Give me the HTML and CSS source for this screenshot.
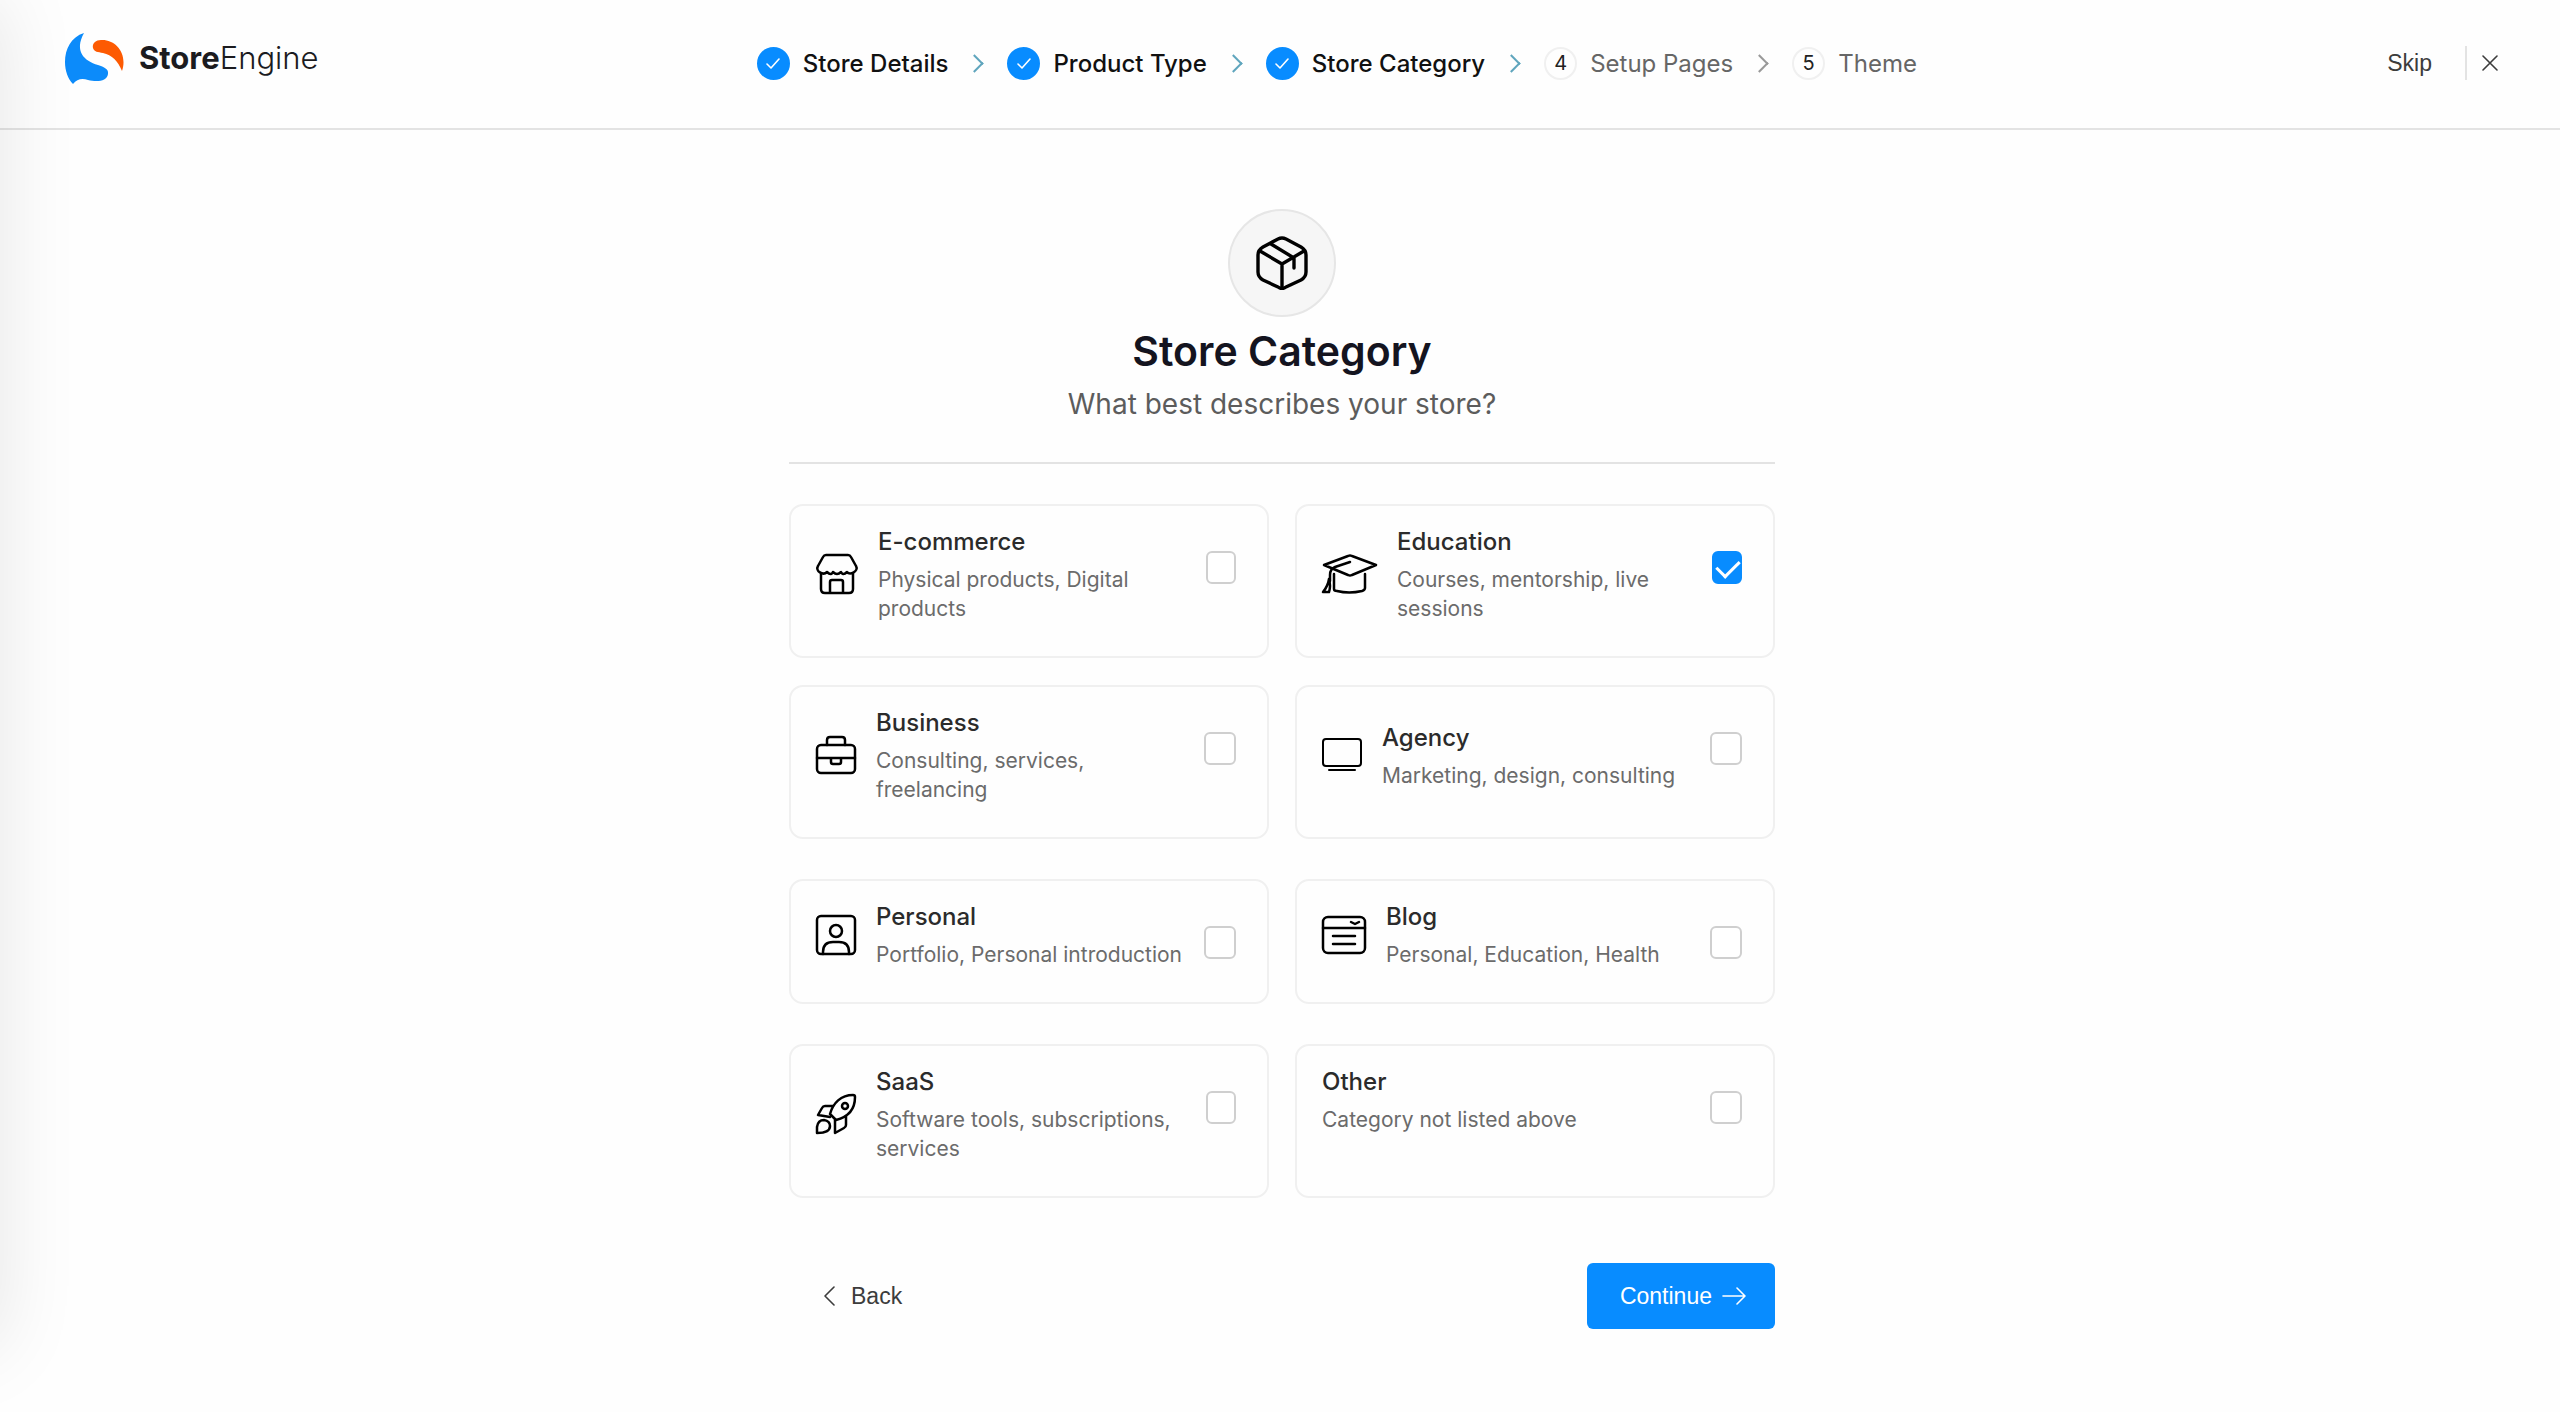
FILE: index.html
```html
<!DOCTYPE html>
<html lang="en">
<head>
  <meta charset="UTF-8">
  <title>StoreEngine Setup</title>
  <link rel="stylesheet" href="styles.css">
</head>
<body>
  <header class="header">
    <a href="#" class="logo">
      <svg class="logo-mark" width="60" height="52" viewBox="0 0 60 52">
        <path fill="#0c8bfa" d="M19 0C6 4 0 16 0 29c0 9 3 17 8 22 4-5 9-6 15-4 8 2 19 2 20-6 1-5-4-7-10-9C19 28 9 18 19 0Z"/>
        <path fill="#fd5a02" d="M57 38C63 20 50 6 36 7c-6 0-9 4-8 8 1 4 5 4 10 5 9 2 15 8 19 18Z"/>
      </svg>
      <span class="logo-text"><b>Store</b>Engine</span>
    </a>
    <nav class="progress">
      <ol class="steps">
        <li class="step done">
          <span class="step-badge"><svg width="14" height="11" viewBox="0 0 14 11"><path d="M1 6l4 4 8-9"/></svg></span>
          Store Details
        </li>
        <li class="step done">
          <span class="step-badge"><svg width="14" height="11" viewBox="0 0 14 11"><path d="M1 6l4 4 8-9"/></svg></span>
          Product Type
        </li>
        <li class="step done">
          <span class="step-badge"><svg width="14" height="11" viewBox="0 0 14 11"><path d="M1 6l4 4 8-9"/></svg></span>
          Store Category
        </li>
        <li class="step">
          <span class="step-badge">4</span>
          Setup Pages
        </li>
        <li class="step">
          <span class="step-badge">5</span>
          Theme
        </li>
      </ol>
    </nav>
    <div class="header-actions">
      <button type="button" class="skip">Skip</button>
      <button type="button" class="close" aria-label="Close">
        <svg width="16" height="16" viewBox="0 0 16 16"><path d="M1 1l14 14M15 1L1 15"/></svg>
      </button>
    </div>
  </header>

  <main class="setup">
    <div class="intro">
      <div class="intro-icon">
        <svg width="52" height="54" viewBox="0 0 52 54">
          <path d="M22 3 7 11Q2 14 2 19V36Q2 41 7 44L22 51Q26 54 30 51L45 44Q50 41 50 36V19Q50 14 45 11L30 3Q26 1 22 3Z"/>
          <path d="M4 15l22 13 22-13M26 28v24M15 8l23 14v10"/>
        </svg>
      </div>
      <h1>Store Category</h1>
      <p>What best describes your store?</p>
    </div>

    <form>
      <div class="cards">
        <label class="card">
          <svg class="icon" width="42" height="40" viewBox="0 0 42 40">
            <path d="M10 1h22q2 0 3 2l5 9c3 5-6 10-9 6q-4 4-6 0-4 4-8 0-2 4-6 0C7 22-1 17 2 12l5-9q1-2 3-2Z"/>
            <path d="M5 20v15q0 4 4 4h24q4 0 4-4V20M14 39V28q0-2 2-2h9q2 0 2 2v11"/>
          </svg>
          <span class="card-text">
            <strong>E-commerce</strong>
            <span>Physical products, Digital products</span>
          </span>
          <input type="checkbox" class="narrow" name="category">
        </label>
        <label class="card">
          <svg class="icon" width="55" height="40" viewBox="0 0 55 40">
            <path d="M2 11 26 2q2-1 4 0l24 9-24 10q-2 1-4 0ZM28 8 13 13q-5 2-5 8v6"/>
            <path d="M12 20v15q0 2 3 2 12 3 25 0 3-1 3-3V20"/>
            <path d="M7 25Q6 32 1 38h6q2-6 0-13Z"/>
          </svg>
          <span class="card-text">
            <strong>Education</strong>
            <span>Courses, mentorship, live sessions</span>
          </span>
          <input type="checkbox" class="narrow" name="category" checked>
        </label>
        <label class="card">
          <svg class="icon" width="40" height="38" viewBox="0 0 40 38">
            <rect x="1" y="9" width="38" height="28" rx="4"/>
            <path d="M11 9V4q0-3 3-3h12q3 0 3 3v5M1 22h38M15 22v4q0 2 2 2h6q2 0 2-2v-4"/>
          </svg>
          <span class="card-text">
            <strong>Business</strong>
            <span>Consulting, services, freelancing</span>
          </span>
          <input type="checkbox" name="category">
        </label>
        <label class="card">
          <svg class="icon icon-thin" width="40" height="34" viewBox="0 0 40 34">
            <rect x="1" y="1" width="38" height="27" rx="3"/>
            <path d="M7 32h26"/>
          </svg>
          <span class="card-text">
            <strong>Agency</strong>
            <span>Marketing, design, consulting</span>
          </span>
          <input type="checkbox" name="category">
        </label>
      </div>

      <div class="cards">
        <label class="card">
          <svg class="icon" width="40" height="40" viewBox="0 0 40 40">
            <rect x="1" y="1" width="38" height="38" rx="4"/>
            <circle cx="20" cy="16" r="6"/>
            <path d="M7 39v-2q0-10 10-10h6q10 0 10 10v2"/>
          </svg>
          <span class="card-text">
            <strong>Personal</strong>
            <span>Portfolio, Personal introduction</span>
          </span>
          <input type="checkbox" name="category">
        </label>
        <label class="card">
          <svg class="icon" width="44" height="40" viewBox="0 0 44 40">
            <rect x="1" y="2" width="42" height="36" rx="5"/>
            <path d="M1 13h42M11 21h22M11 29h22M29 7l4 2 4-2"/>
          </svg>
          <span class="card-text">
            <strong>Blog</strong>
            <span>Personal, Education, Health</span>
          </span>
          <input type="checkbox" name="category">
        </label>
      </div>

      <div class="cards">
        <label class="card">
          <svg class="icon" width="40" height="40" viewBox="0 0 40 40">
            <path d="M14 20C17 9 25 1 37 1q2 0 2 2c0 12-7 20-19 23Z"/>
            <circle cx="29" cy="12" r="3"/>
            <path d="M17 12H9q-2 0-3 2l-4 7 12 2M30 22v9q0 2-2 3l-9 5V26"/>
            <path d="M1 39v-6q1-7 7-7 6 1 6 6 0 7-13 7Z"/>
          </svg>
          <span class="card-text">
            <strong>SaaS</strong>
            <span>Software tools, subscriptions, services</span>
          </span>
          <input type="checkbox" class="narrow" name="category">
        </label>
        <label class="card card-plain">
          <span class="card-text">
            <strong>Other</strong>
            <span>Category not listed above</span>
          </span>
          <input type="checkbox" name="category">
        </label>
      </div>

      <div class="form-actions">
        <button type="button" class="back">
          <svg width="12" height="20" viewBox="0 0 12 20"><path d="M11 1L2 10l9 9"/></svg>
          Back
        </button>
        <button type="submit" class="continue">
          Continue
          <svg width="24" height="18" viewBox="0 0 24 18"><path d="M1 9h22M15 1l8 8-8 8"/></svg>
        </button>
      </div>
    </form>
  </main>
</body>
</html>
```

FILE: styles.css
```css
* {
  box-sizing: border-box;
}
body {
  margin: 0;
  min-height: 100vh;
  font-family: Inter, sans-serif;
  color: #2b2b2b;
  background: #fefefe;
}
/* shadow of the admin sidebar */
body::before {
  content: "";
  position: fixed;
  top: 0;
  bottom: 66px;
  left: -160px;
  width: 160px;
  box-shadow: 0 0 80px rgba(0, 0, 0, 0.1);
}
svg {
  display: block;
  flex-shrink: 0;
  fill: none;
  stroke: currentColor;
  stroke-width: 2;
  stroke-linecap: round;
  stroke-linejoin: round;
}
button {
  border: 0;
  background: none;
  padding: 0;
  cursor: pointer;
  color: #3c3c3c;
  font-family: "Liberation Sans", Arial, sans-serif;
  font-size: 23px;
}
button svg,
.step-badge svg {
  stroke-width: 1.6;
}

/* header */
.header {
  display: flex;
  align-items: center;
  justify-content: space-between;
  height: 130px;
  padding: 0 62px 2px 65px;
  border-bottom: 2px solid #e3e3e3;
}
.logo {
  display: flex;
  align-items: center;
  gap: 14px;
  padding-bottom: 8px;
  color: #1b1b1f;
  text-decoration: none;
}
.logo-mark {
  stroke: none;
}
.logo-text {
  padding-bottom: 4px;
  font-size: 31px;
  font-weight: 300;
}
.logo-text b {
  font-weight: 700;
}
.progress {
  margin-right: 32px;
}
.steps {
  display: flex;
  margin: 0;
  padding: 0;
  list-style: none;
}
.step {
  display: flex;
  align-items: center;
  gap: 13px;
  font-size: 24px;
  color: #666;
}
.step.done {
  color: #111;
  font-weight: 500;
}
.step + .step::before {
  content: "";
  width: 11px;
  height: 11px;
  margin: 0 13px 0 20px;
  border: solid #999;
  border-width: 2px 2px 0 0;
  transform: rotate(45deg);
}
.step.done::before,
.step.done + .step::before {
  border-color: #5fa5bd;
}
.step-badge {
  display: flex;
  align-items: center;
  justify-content: center;
  width: 33px;
  height: 33px;
  border: 2px solid #f0f0f0;
  border-radius: 50%;
  color: #222;
  font-size: 20px;
}
.done .step-badge {
  background: #088cff;
  border-color: #088cff;
  color: #fff;
}
.header-actions {
  display: flex;
  align-items: center;
}
.skip {
  padding-right: 33px;
}
.close {
  height: 34px;
  padding-left: 15px;
  border-left: 2px solid #e3e3e3;
}

/* content */
.setup {
  width: 990px;
  max-width: 100%;
  margin: 0 auto;
  padding: 79px 0 0 4px;
}
.intro {
  padding-bottom: 38px;
  border-bottom: 2px solid #e3e3e3;
  text-align: center;
}
.intro-icon {
  display: flex;
  align-items: center;
  justify-content: center;
  width: 108px;
  height: 108px;
  margin: 0 auto 10px;
  border: 2px solid #e6e6e6;
  border-radius: 50%;
  background: #f6f6f6;
  color: #000;
}
.intro-icon svg {
  stroke-width: 3.4;
}
.intro h1 {
  margin: 0;
  font-size: 41px;
  line-height: 48px;
  font-weight: 600;
  color: #14141f;
}
.intro p {
  margin: 9px 0 0;
  font-size: 28px;
  line-height: 40px;
  color: #5c5c5c;
}

/* category cards */
.cards {
  display: grid;
  grid-template-columns: 1fr 1fr;
  gap: 27px 26px;
  margin-top: 40px;
}
.card {
  display: flex;
  align-items: center;
  gap: 20px;
  padding: 19px 31px 33px 25px;
  border: 2px solid #f0f0f0;
  border-radius: 14px;
  cursor: pointer;
}
.card-plain {
  align-items: flex-start;
}
.icon {
  color: #000;
  overflow: visible;
  stroke-width: 2.5;
}
.icon-thin {
  stroke-width: 2;
}
.card-text {
  flex: 1;
}
.card-text strong {
  display: block;
  margin-bottom: 6px;
  font-size: 24px;
  line-height: 34px;
  font-weight: 500;
}
.card-text span {
  display: block;
  font-size: 21px;
  line-height: 29px;
  color: #6b6b6b;
}
.card input {
  appearance: none;
  align-self: flex-start;
  display: flex;
  align-items: center;
  justify-content: center;
  width: 32px;
  height: 33px;
  margin: 26px 0 0;
  border: 2px solid #cfcfcf;
  border-radius: 6px;
  background: #fff;
}
.card input.narrow {
  width: 30px;
}
.card input:checked {
  border-color: #088cff;
  background: #088cff;
}
.card input:checked::before {
  content: "";
  flex-shrink: 0;
  width: 19px;
  height: 11px;
  margin: 0 0 4px 2px;
  border: solid #fff;
  border-width: 0 0 3px 3px;
  transform: rotate(-45deg);
}

/* back / continue */
.form-actions {
  display: flex;
  align-items: center;
  justify-content: space-between;
  margin-top: 65px;
}
.back {
  display: flex;
  align-items: center;
  gap: 16px;
  padding-left: 34px;
}
.continue {
  display: flex;
  align-items: center;
  gap: 10px;
  height: 66px;
  padding: 0 29px 0 33px;
  border-radius: 6px;
  background: #088cff;
  color: #fff;
}
```
